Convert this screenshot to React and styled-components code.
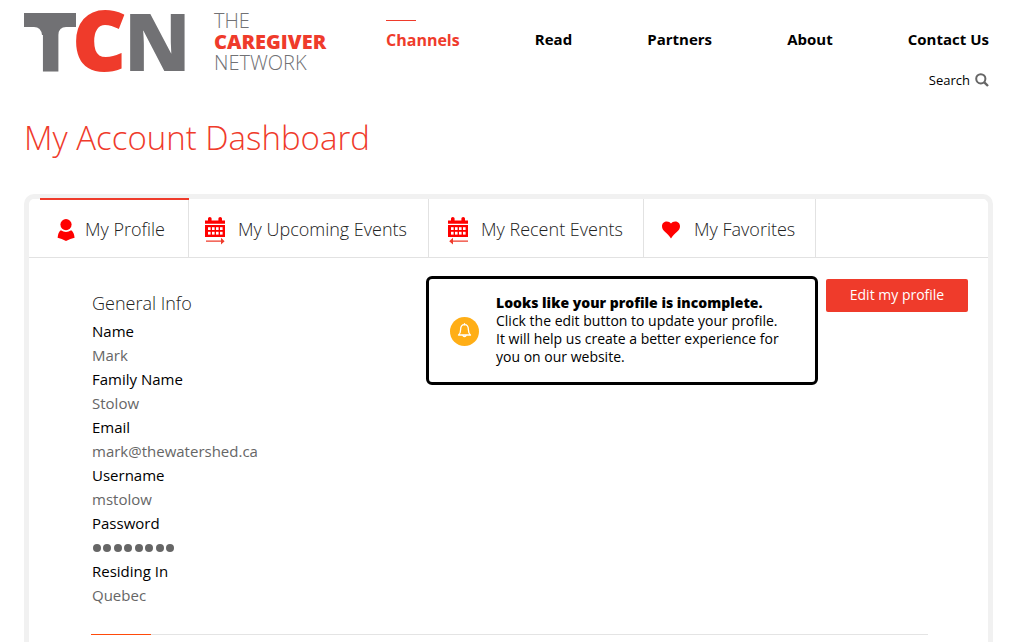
import React from "react";
import styled, { createGlobalStyle } from "styled-components";

const red = "#ef3b2b";
const bright = "#ff0000";
const slate = "#717174";

const GlobalStyle = createGlobalStyle`
  *, *::before, *::after { box-sizing: border-box; }
  body {
    margin: 0;
    background: #fff;
    color: #000;
    font-family: "Open Sans", "Noto Sans", sans-serif;
    overflow-x: hidden;
  }
  button { font-family: inherit; cursor: pointer; }
`;

const Page = styled.div`
  padding: 0 30px 0 24px;
`;

const Header = styled.header`
  display: flex;
  align-items: flex-start;
  gap: 62px;
  height: 116px;
`;

const Logo = styled.a`
  display: flex;
  width: 300px;
  flex: none;
  gap: 24px;
  color: ${slate};
  text-decoration: none;
`;

const LogoSvg = styled.svg`
  display: block;
  flex: none;
  font-size: 80px;
  font-weight: 800;
`;

const LogoWords = styled.span`
  display: flex;
  flex-direction: column;
  padding-top: 10px;
  font-size: 20px;
  font-weight: 300;
  line-height: 21px;
`;

const LogoStrong = styled.span`
  color: ${red};
  font-weight: 800;
`;

const HeaderSide = styled.div`
  display: flex;
  flex: 1;
  flex-direction: column;
  padding: 20px 4px 0 0;
`;

const Nav = styled.nav`
  display: flex;
  align-items: flex-start;
  justify-content: space-between;
`;

const NavLink = styled.a`
  position: relative;
  color: ${(p) => (p.$active ? red : "#000")};
  font-size: ${(p) => (p.$active ? "16px" : "15px")};
  font-weight: 700;
  line-height: ${(p) => (p.$active ? "40px" : "38px")};
  text-decoration: none;
  white-space: nowrap;

  &::before {
    content: "";
    display: ${(p) => (p.$active ? "block" : "none")};
    position: absolute;
    top: 0;
    left: 0;
    width: 30px;
    height: 1px;
    background: ${red};
  }
`;

const SearchButton = styled.button`
  display: flex;
  align-items: center;
  align-self: flex-end;
  gap: 5px;
  margin-top: 10px;
  padding: 0;
  border: 0;
  background: none;
  color: #000;
  font-size: 13px;
  line-height: 20px;
`;

const Title = styled.h1`
  margin: 0;
  color: ${red};
  font-size: 33px;
  font-weight: 300;
  line-height: 44px;
`;

const Panel = styled.main`
  margin-top: 34px;
  padding-bottom: 7px;
  border: 5px solid #f1f1f1;
  border-bottom: 0;
  border-radius: 10px 10px 0 0;
`;

const Tabs = styled.div`
  display: flex;
  height: 59px;
  padding-left: 11px;
  border-bottom: 1px solid #e2e2e2;
`;

const Tab = styled.button`
  position: relative;
  display: flex;
  align-items: center;
  gap: ${(p) => p.$gap}px;
  width: ${(p) => p.$width}px;
  padding: 2px 0 0 ${(p) => p.$pad}px;
  border: 0;
  border-right: 1px solid #e2e2e2;
  background: none;
  color: #222;
  font-size: 18px;
  font-weight: 300;
  line-height: 24px;
  white-space: nowrap;

  &::before {
    content: "";
    display: ${(p) => (p["aria-selected"] ? "block" : "none")};
    position: absolute;
    top: -1px;
    left: 0;
    right: -1px;
    height: 2px;
    background: ${red};
  }
`;

const Content = styled.div`
  display: flex;
  align-items: flex-start;
  padding: 18px 20px 0 63px;
`;

const Profile = styled.section`
  flex: 1;
  padding-top: 13px;
`;

const SectionTitle = styled.h2`
  margin: 0 0 2px;
  color: #222;
  font-size: 18px;
  font-weight: 300;
  line-height: 28px;
`;

const Fields = styled.dl`
  margin: 0;
  font-size: 15px;
  line-height: 24px;
`;

const Term = styled.dt`
  color: #000;
`;

const Value = styled.dd`
  margin: 0;
  color: #666;
`;

const Dots = styled.span`
  display: flex;
  align-items: center;
  justify-content: space-between;
  width: 82px;
  height: 24px;
  padding: 1px 0 0 1px;
`;

const Dot = styled.span`
  width: 8px;
  height: 8px;
  border-radius: 50%;
  background: #666;
`;

const Notice = styled.aside`
  display: flex;
  align-items: center;
  gap: 17px;
  width: 392px;
  height: 109px;
  padding-left: 21px;
  border: 3px solid #000;
  border-radius: 6px;
`;

const NoticeText = styled.p`
  width: 288px;
  margin: 0;
  padding-bottom: 2px;
  font-size: 14px;
  line-height: 18px;
`;

const NoticeHeading = styled.strong`
  display: block;
  font-weight: 800;
`;

const EditButton = styled.button`
  width: 142px;
  height: 33px;
  margin: 3px 0 0 8px;
  padding: 0 0 2px;
  border: 0;
  border-radius: 2px;
  background: ${red};
  color: #fff;
  font-size: 14px;
  line-height: 20px;
`;

const Divider = styled.div`
  height: 1px;
  margin: 27px 60px 0 62px;
  background: linear-gradient(to right, #ff4a0a 60px, #e4e4e4 60px);
`;

const Icon = styled.svg`
  display: block;
  flex: none;
`;

function LogoMark() {
  return (
    <LogoSvg width="166" height="80" viewBox="0 0 166 80" fill={slate} role="img" aria-label="TCN">
      <text x="3" y="71">T</text>
      {/* wide bar of the T with rounded shoulders running into the stem */}
      <path d="M0 13h52v14H42q-7 0-8 8H18q-1-8-8-8H0Z" />
      <text x="100" y="71">N</text>
      <text x="49" y="70" fontSize="81" fill={red} stroke={red} strokeWidth="2">
        C
      </text>
    </LogoSvg>
  );
}

function SearchIcon() {
  return (
    <Icon width="14" height="14" viewBox="0 0 14 14" fill="none" stroke="#666" aria-hidden="true">
      <circle cx="5.8" cy="5.8" r="4.6" strokeWidth="2" />
      <path d="M9.3 9.3 13 13" strokeWidth="2.4" />
    </Icon>
  );
}

function UserIcon() {
  return (
    <Icon width="18" height="26" viewBox="0 -2 18 26" fill={bright} aria-hidden="true">
      <circle cx="9" cy="6.6" r="5.6" />
      <path d="M3.8 12.2Q9 15.8 14.2 12.2Q17.2 14.5 17.6 19.8Q13.5 20.6 9 23Q4.600 20.600 .6 19.800Q.9 14.500 3.800 12.200Z" />
    </Icon>
  );
}

function CalendarIcon({ back }) {
  return (
    <Icon width="20" height="32" viewBox="0 -4 20 32" aria-hidden="true">
      <path
        fill={bright}
        d="M0 3.6h3V1.5Q3 0 4.8 0t1.8 1.5v2.1h6.800V1.500Q13.400 0 15.200 0t1.800 1.500v2.100h3v3.200H0Z"
      />
      <path fill={bright} d="M0 8h20v12H0Z" />
      {[10.2, 14.8].map((y) =>
        [3, 7, 11, 15].map((x) => (
          <rect key={`${x}-${y}`} x={x} y={y} width="2.6" height="2.8" fill="#fff" />
        ))
      )}
      {back ? (
        <path fill={red} d="M20 23.5v1.3H5v2.8L1.200 24.200 5 20.800v2.700Z" />
      ) : (
        <path fill={red} d="M1 23.5v1.3h15v2.8l3.600-3.400L16 20.800v2.700Z" />
      )}
    </Icon>
  );
}

function HeartIcon() {
  return (
    <Icon width="20" height="20" viewBox="0 -2 20 20" fill={bright} aria-hidden="true">
      <path d="M10 2.5C12-.7 19-.5 19 5.3c0 5-5.5 6.4-9 12.2C6.5 11.7 1 10.3 1 5.3 1-.5 8-.7 10 2.5Z" />
    </Icon>
  );
}

function BellIcon() {
  return (
    <Icon width="29" height="31" viewBox="0 -2 29 31" aria-hidden="true">
      <circle cx="14.5" cy="14.5" r="14.5" fill="#ffae16" />
      <path
        d="M8.5 18Q10.6 16.3 10.6 12.7 10.6 7.7 14.5 7.7T18.4 12.7Q18.4 16.3 20.5 18Z"
        fill="none"
        stroke="#fff"
        strokeWidth="1.3"
        strokeLinejoin="round"
      />
      <path d="M14.5 6.6v1.2M12.9 18.5q1.6 2 3.2 0" fill="none" stroke="#fff" strokeWidth="1.3" strokeLinecap="round" />
    </Icon>
  );
}

const links = ["Channels", "Read", "Partners", "About", "Contact Us"];

const tabs = [
  { label: "My Profile", icon: <UserIcon />, width: 149, pad: 17, gap: 10 },
  { label: "My Upcoming Events", icon: <CalendarIcon />, width: 240, pad: 16, gap: 13 },
  { label: "My Recent Events", icon: <CalendarIcon back />, width: 215, pad: 19, gap: 13 },
  { label: "My Favorites", icon: <HeartIcon />, width: 172, pad: 17, gap: 13 },
];

const fields = [
  ["Name", "Mark"],
  ["Family Name", "Stolow"],
  ["Email", "mark@thewatershed.ca"],
  ["Username", "mstolow"],
  ["Password", null],
  ["Residing In", "Quebec"],
];

export default function App() {
  return (
    <Page>
      <GlobalStyle />
      <Header>
        <Logo href="#">
          <LogoMark />
          <LogoWords>
            <span>THE</span>
            <LogoStrong>CAREGIVER</LogoStrong>
            <span>NETWORK</span>
          </LogoWords>
        </Logo>
        <HeaderSide>
          <Nav>
            {links.map((label, i) => (
              <NavLink key={label} href="#" $active={i === 0}>
                {label}
              </NavLink>
            ))}
          </Nav>
          <SearchButton type="button">
            Search
            <SearchIcon />
          </SearchButton>
        </HeaderSide>
      </Header>
      <Title>My Account Dashboard</Title>
      <Panel>
        <Tabs role="tablist">
          {tabs.map((tab, i) => (
            <Tab
              key={tab.label}
              type="button"
              role="tab"
              aria-selected={i === 0}
              $width={tab.width}
              $pad={tab.pad}
              $gap={tab.gap}
            >
              {tab.icon}
              {tab.label}
            </Tab>
          ))}
        </Tabs>
        <Content>
          <Profile>
            <SectionTitle>General Info</SectionTitle>
            <Fields>
              {fields.map(([term, value]) => (
                <React.Fragment key={term}>
                  <Term>{term}</Term>
                  <Value>
                    {value || (
                      <Dots role="img" aria-label="Hidden password">
                        {Array.from({ length: 8 }, (_, i) => (
                          <Dot key={i} />
                        ))}
                      </Dots>
                    )}
                  </Value>
                </React.Fragment>
              ))}
            </Fields>
          </Profile>
          <Notice>
            <BellIcon />
            <NoticeText>
              <NoticeHeading>Looks like your profile is incomplete.</NoticeHeading>
              Click the edit button to update your profile. It will help us create a better experience for you on our
              website.
            </NoticeText>
          </Notice>
          <EditButton type="button">Edit my profile</EditButton>
        </Content>
        <Divider />
      </Panel>
    </Page>
  );
}
